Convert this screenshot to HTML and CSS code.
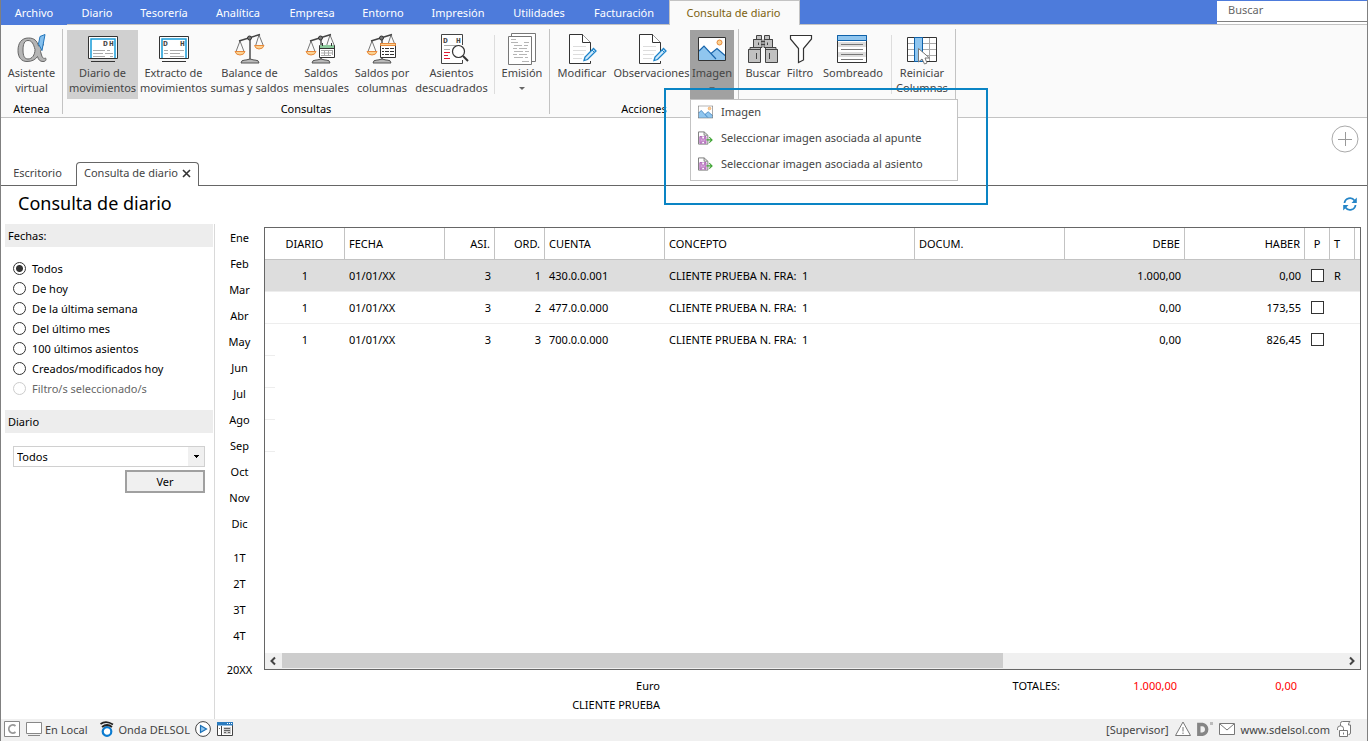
FILE: index.html
```html
<!DOCTYPE html>
<html lang="es">
<head>
<meta charset="utf-8">
<title>Consulta de diario</title>
<link rel="stylesheet" href="styles.css">
</head>
<body>
<svg class="defs" aria-hidden="true">
  <symbol id="scale" viewBox="0 0 36 36">
    <path d="M8 11L4 21.5M8 11L12 21.5M27 5L23.500 16M27 5L31.500 16" fill="none" stroke="#777"/>
    <path d="M7 11L28 4.500M18 9V30" fill="none" stroke="#444" stroke-width="1.400"/>
    <circle cx="17.500" cy="8" r="2" fill="#777" stroke="#333"/>
    <path d="M3 21.500H13Q12 25 8 25Q4 25 3 21.500Z" fill="#fbd293" stroke="#e8893a"/>
    <path d="M9 33Q9 30 13 30H14Q18 28 22 30H23Q27 30 27 33Z" fill="#b9b9b9" stroke="#555"/>
  </symbol>
  <symbol id="page-edit" viewBox="0 0 36 36">
    <path d="M26.500 26V12.500L18.500 4.500H5.500V33.500H26.500V31" fill="#fff" stroke="#333"/>
    <path d="M18.500 4.500V12.500H26.500" fill="#fff" stroke="#333"/>
    <path d="M9 16.500H22M9 20.500H22M9 24.500H20M9 28.500H18" stroke="#ddd"/>
    <path d="M20 30.500L21 27L29.500 18.500L32 21L23.500 29.500Z" fill="#cfe9fa" stroke="#1c83c9" stroke-width="1.300"/>
    <path d="M28 20L30.500 22.500" stroke="#1c83c9"/>
  </symbol>
  <symbol id="image" viewBox="0 0 28 24">
    <path d="M.5 .5H27.500V23.500H.5Z" fill="#fff"/>
    <path d="M1 14L6 9L13 16.500L19 11.500L27 18.500V23H1Z" fill="#90c6ef"/>
    <path d="M1 14L6 9L18 22M13 16.500L19 11.500L27 18.500" fill="none" stroke="#1a67ad" stroke-width="1.200"/>
    <circle cx="21.500" cy="5.500" r="2.500" fill="#fbd293" stroke="#e8893a"/>
    <path d="M.5 .5H27.500V23.500H.5Z" fill="none" stroke="#333"/>
  </symbol>
  <symbol id="save-arrow" viewBox="0 0 16 16">
    <path d="M.5 1.500H6.500L10.500 5V14.500H.5Z" fill="#fff" stroke="#777"/>
    <path d="M6.500 1.500V5H10" fill="none" stroke="#777"/>
    <path d="M2 6.500H8.500V13.500H2Z" fill="#d8a8dc" stroke="#a65ab0"/>
    <path d="M4 6.500V9H7V6.500M4 13.500V11.500H7V13.500" fill="#fff" stroke="#a65ab0" stroke-width=".8"/>
    <path d="M9 10H14.500M12 7L15 10L12 13" fill="none" stroke="#40a535" stroke-width="1.200"/>
  </symbol>
</svg>

<div class="app">
  <nav class="menubar">
    <a class="menu-file" href="#">Archivo</a>
    <a href="#">Diario</a>
    <a href="#">Tesorería</a>
    <a href="#">Analítica</a>
    <a href="#">Empresa</a>
    <a href="#">Entorno</a>
    <a href="#">Impresión</a>
    <a href="#">Utilidades</a>
    <a href="#">Facturación</a>
    <a class="menu-current" href="#">Consulta de diario</a>
    <div class="search"><input type="text" placeholder="Buscar" aria-label="Buscar"></div>
  </nav>

  <div class="ribbon">
    <section class="group">
      <div class="tools tools-atenea">
        <button class="tool" type="button">
          <svg class="icon" viewBox="0 0 36 36"><path d="M29.500 12Q26 18 25 22Q22 31.500 13.500 31.500Q4.500 31.500 4.500 20.500Q4.500 8.500 14.500 8.500Q21 8.500 23 16L25.500 27Q26.500 30.500 30.500 28" fill="none" stroke="#666" stroke-width="0"/><path d="M24.500 16C23 10.500 20 8 14.500 8C7.500 8 4 13 4 20.500C4 27.500 7.500 31.500 13 31.500C18 31.500 21.500 29.500 23.500 26.500C24.500 30 26 31.500 29 31.500C32 31.500 32.500 29.500 31.500 28C29.500 29 28.500 28 27.500 25L26.500 21.500L29.500 14L26 15ZM21 19.500C21 25 18 29 14 29C10.500 29 9 26 9 20C9 14 10.500 10.500 14 10.500C18 10.500 19.500 14 21 19.500Z" fill="#b5b5b5" stroke="#666" fill-rule="evenodd"/><path d="M26 6.500L31 4.500L28 20.500L24.500 14Z" fill="#85c0ee" stroke="#2476bb"/></svg>
          Asistente<br>virtual</button>
      </div>
      <h2>Atenea</h2>
    </section>

    <section class="group">
      <div class="tools tools-consultas">
        <button class="tool selected" type="button">
          <svg class="icon" viewBox="0 0 36 36"><path d="M3.500 6.500H32.500V28.500H3.500ZM6 31.500H30" fill="#fff" stroke="#333"/><path d="M6 28V9H30V28" fill="none" stroke="#189cd8" stroke-width="1.500"/><path d="M8 20.500H20M22 20.500H25M8 23.500H18M20 23.500H28M8 26.500H20M25 26.500H28" stroke="#aaa"/><text class="dh" x="18" y="16">D</text><text class="dh" x="24" y="16">H</text></svg>
          Diario de<br>movimientos</button>
        <button class="tool" type="button">
          <svg class="icon" viewBox="0 0 36 36"><path d="M3.500 6.500H32.500V28.500H3.500ZM6 31.500H30" fill="#fff" stroke="#333"/><path d="M6 28V9H30V28" fill="none" stroke="#189cd8" stroke-width="1.500"/><path d="M8 20.500H12M14 20.500H28M8 23.500H12M14 23.500H24M14 26.500H28" stroke="#aaa"/><text class="dh" x="7" y="16">D</text><text class="dh" x="24" y="16">H</text></svg>
          Extracto de<br>movimientos</button>
        <button class="tool" type="button">
          <svg class="icon" viewBox="0 0 36 36"><use href="#scale"/><path d="M22.500 15.500H32Q31 19 27 19Q23.500 19 22.500 15.500Z" fill="#fbd293" stroke="#e8893a"/></svg>
          Balance de<br>sumas y saldos</button>
        <button class="tool" type="button">
          <svg class="icon" viewBox="0 0 36 36"><use href="#scale"/><path d="M16.500 15.500H31.500V27.500H16.500Z" fill="#fff" stroke="#333"/><path d="M17 15H31V18H17Z" fill="#8cca9c"/><path d="M16 18.500H32" stroke="#333"/><path d="M19.500 13V16M28.500 13V16" stroke="#333"/><path d="M18 20.500H30M18 23H30M18 25.500H28M21.500 20V26M25.500 20V26M29.500 20V25" stroke="#aaa"/></svg>
          Saldos<br>mensuales</button>
        <button class="tool" type="button">
          <svg class="icon" viewBox="0 0 36 36"><use href="#scale"/><path d="M16.500 13.500H31.500V27.500H16.500Z" fill="#fff" stroke="#333"/><path d="M16.500 13.500H31.500V15.500H16.500Z" fill="#fbd293" stroke="#e8893a"/><path d="M18 18.500H20M21 18.500H25M26 18.500H30M18 21.500H20M21 21.500H25M26 21.500H30M18 24.500H20M21 24.500H25M26 24.500H30" stroke="#333"/></svg>
          Saldos por<br>columnas</button>
        <button class="tool" type="button">
          <svg class="icon" viewBox="0 0 36 36"><path d="M28.500 15V4.500H7.500V33.500H28.500V30" fill="#fff" stroke="#444"/><text class="dh" x="9" y="13">D</text><text class="dh" x="22" y="13">H</text><path d="M10 15.500H26M10 19.500H16" stroke="#aaa"/><path d="M10 22.500H16M10 25.500H14M10 28.500H16" stroke="#df1730" stroke-width="1.200"/><circle cx="24.500" cy="21.500" r="6" fill="#fff" stroke="#333" stroke-width="1.200"/><path d="M29 26L34 31" stroke="#333" stroke-width="2"/></svg>
          Asientos<br>descuadrados</button>
        <i class="rule"></i>
        <button class="tool" type="button">
          <svg class="icon" viewBox="0 0 36 36"><path d="M7.500 3.500H31.500V31.500H7.500Z" fill="#fff" stroke="#777"/><path d="M4.500 6.500H27.500V34.500H4.500Z" fill="#fff" stroke="#777"/><path d="M7 9.500H12M20 12.500H25M7 12.500H14M10 15.500H18M20 15.500H24M9 18.500H13M15 18.500H23M10 21.500H19M21 21.500H25M9 24.500H13M15 24.500H23M10 27.500H19M21 27.500H24M18 31.500H25" stroke="#b5b5b5"/></svg>
          Emisión<span class="arrow"></span></button>
      </div>
      <h2>Consultas</h2>
    </section>

    <section class="group">
      <div class="tools tools-acciones">
        <button class="tool" type="button"><svg class="icon" viewBox="0 0 36 36"><use href="#page-edit"/></svg>Modificar</button>
        <button class="tool" type="button"><svg class="icon" viewBox="0 0 36 36"><use href="#page-edit"/></svg>Observaciones</button>
        <div class="dropdown">
          <button class="tool open" type="button" aria-expanded="true"><svg class="icon" viewBox="0 0 36 36"><use href="#image" x="4" y="7" width="28" height="24"/></svg>Imagen<span class="arrow"></span></button>
          <div class="menu">
            <button type="button"><svg viewBox="0 0 28 24"><use href="#image"/></svg>Imagen</button>
            <button type="button"><svg viewBox="0 0 16 16"><use href="#save-arrow"/></svg>Seleccionar imagen asociada al apunte</button>
            <button type="button"><svg viewBox="0 0 16 16"><use href="#save-arrow"/></svg>Seleccionar imagen asociada al asiento</button>
          </div>
          <div class="highlight"></div>
        </div>
      </div>
      <h2>Acciones</h2>
    </section>

    <section class="group">
      <div class="tools tools-ver">
        <button class="tool" type="button"><svg class="icon" viewBox="0 0 36 36"><path d="M3.500 19.500H5V17.500H8.500V9.500H11.500V5.500H16.500V9.500H17V17.500H15.500V32.500H3.500ZM32.500 19.500H31V17.500H27.500V9.500H24.500V5.500H19.500V9.500H19V17.500H20.500V32.500H32.500Z" fill="#c1c1c1" stroke="#444"/><path d="M3.500 19.500H15.500M20.500 19.500H32.500M8 17.500H17M19 17.500H28M8.500 9.500H17M19 9.500H27.500M16 11.500H20M16 14.500H20M11.500 23V29M24.500 23V29M13.500 12.500V15M22.500 12.500V15" fill="none" stroke="#444"/></svg>Buscar</button>
        <button class="tool" type="button"><svg class="icon" viewBox="0 0 36 36"><path d="M8.500 5.500H29.500V9L21.500 18.500V30L16.500 32.500V18.500L8.500 9Z" fill="#fff" stroke="#333" stroke-width="1.200"/></svg>Filtro</button>
        <button class="tool" type="button"><svg class="icon" viewBox="0 0 36 36"><path d="M2.500 5.500H31.500V32.500H2.500Z" fill="#fff" stroke="#333"/><path d="M3 12H31V17H3ZM3 22H31V27H3Z" fill="#ddd"/><path d="M2.500 5.500H31.500V10.500H2.500Z" fill="#90c6ef" stroke="#0f62aa"/><path d="M6 14.500H28M6 19.500H28M6 24.500H28M6 29.500H28" stroke="#777"/></svg>Sombreado</button>
        <i class="rule"></i>
        <button class="tool" type="button"><svg class="icon" viewBox="0 0 36 36"><path d="M3.500 7.500H32.500V31.500H3.500Z" fill="#fff" stroke="#333"/><path d="M4 13.500H32M4 19.500H32M4 25.500H32M25.500 8V31" stroke="#aaa"/><path d="M10.500 7.500H18.500V31.500H10.500Z" fill="#90c6ef" stroke="#0f62aa"/><path d="M14.500 18.500V32L18 29L20.500 34L23 33L21 28H25.500Z" fill="#fff" stroke="#777"/></svg>Reiniciar<br>Columnas</button>
      </div>
    </section>
  </div>

  <div class="tabstrip">
    <a class="tab" href="#">Escritorio</a>
    <div class="tab tab-current"><a href="#">Consulta de diario</a><button class="tab-close" type="button" aria-label="Cerrar"><svg viewBox="0 0 9 9"><path d="M1 1L8 8M8 1L1 8" stroke="#333" stroke-width="1.600"/></svg></button></div>
    <div class="tab-line"><button class="add" type="button" aria-label="Añadir"><svg viewBox="0 0 28 28"><circle cx="14" cy="14" r="13" fill="#fff" stroke="#aaa"/><path d="M7 14.500H21M14.500 7V21" stroke="#999"/></svg></button></div>
  </div>

  <header class="title">
    <h1>Consulta de diario</h1>
    <button type="button" aria-label="Actualizar"><svg viewBox="0 0 14 14"><path d="M1.500 6A5.500 5.500 0 0 1 11.500 3.500M12.500 8A5.500 5.500 0 0 1 2.500 10.500" fill="none" stroke="#2585c7" stroke-width="1.800"/><path d="M13.800 .5V6H8.500ZM.2 13.500V8H5.500Z" fill="#2585c7"/></svg></button>
  </header>

  <div class="work">
    <aside class="filters">
      <h3>Fechas:</h3>
      <div class="radios">
        <label><input type="radio" name="fecha" checked>Todos</label>
        <label><input type="radio" name="fecha">De hoy</label>
        <label><input type="radio" name="fecha">De la última semana</label>
        <label><input type="radio" name="fecha">Del último mes</label>
        <label><input type="radio" name="fecha">100 últimos asientos</label>
        <label><input type="radio" name="fecha">Creados/modificados hoy</label>
        <label class="off"><input type="radio" name="fecha" disabled>Filtro/s seleccionado/s</label>
      </div>
      <h3 id="diario-label">Diario</h3>
      <div class="diary">
        <select aria-labelledby="diario-label"><option>Todos</option></select>
        <button type="button">Ver</button>
      </div>
    </aside>

    <nav class="periods">
      <div><a href="#">Ene</a><a href="#">Feb</a><a href="#">Mar</a><a href="#">Abr</a><a href="#">May</a><a href="#">Jun</a><a href="#">Jul</a><a href="#">Ago</a><a href="#">Sep</a><a href="#">Oct</a><a href="#">Nov</a><a href="#">Dic</a></div>
      <div><a href="#">1T</a><a href="#">2T</a><a href="#">3T</a><a href="#">4T</a></div>
      <div><a href="#">20XX</a></div>
    </nav>

    <main>
      <div class="grid">
        <table>
          <colgroup><col class="w80"><col class="w100"><col class="w50"><col class="w50"><col class="w120"><col><col class="w150"><col class="w120"><col class="w120"><col class="w25"><col class="w25"><col class="w5"></colgroup>
          <thead><tr><th class="mid">DIARIO</th><th>FECHA</th><th class="num">ASI.</th><th class="num">ORD.</th><th>CUENTA</th><th>CONCEPTO</th><th>DOCUM.</th><th class="num">DEBE</th><th class="num">HABER</th><th class="mid">P</th><th>T</th><th></th></tr></thead>
          <tbody>
            <tr class="current"><td class="mid">1</td><td>01/01/XX</td><td class="num">3</td><td class="num">1</td><td>430.0.0.001</td><td>CLIENTE PRUEBA N. FRA:&nbsp; 1</td><td></td><td class="num">1.000,00</td><td class="num">0,00</td><td class="mid"><input type="checkbox" aria-label="P, orden 1"></td><td>R</td><td></td></tr>
            <tr><td class="mid">1</td><td>01/01/XX</td><td class="num">3</td><td class="num">2</td><td>477.0.0.000</td><td>CLIENTE PRUEBA N. FRA:&nbsp; 1</td><td></td><td class="num">0,00</td><td class="num">173,55</td><td class="mid"><input type="checkbox" aria-label="P, orden 2"></td><td></td><td></td></tr>
            <tr class="last"><td class="mid">1</td><td>01/01/XX</td><td class="num">3</td><td class="num">3</td><td>700.0.0.000</td><td>CLIENTE PRUEBA N. FRA:&nbsp; 1</td><td></td><td class="num">0,00</td><td class="num">826,45</td><td class="mid"><input type="checkbox" aria-label="P, orden 3"></td><td></td><td></td></tr>
          </tbody>
        </table>
        <div class="stubs"><i></i><i></i><i></i></div>
        <div class="scroll">
          <svg viewBox="0 0 17 16"><path d="M10 4.500L6.500 8L10 11.500" fill="none" stroke="#444" stroke-width="2"/></svg>
          <div class="track"><div class="thumb"></div></div>
          <svg viewBox="0 0 17 16"><path d="M7 4.500L10.500 8L7 11.500" fill="none" stroke="#444" stroke-width="2"/></svg>
        </div>
      </div>
      <footer class="totals">
        <div>Euro</div><div>TOTALES:</div><div class="red">1.000,00</div><div class="red">0,00</div>
        <div>CLIENTE PRUEBA</div>
      </footer>
    </main>
  </div>

  <footer class="status">
    <svg viewBox="0 0 16 16"><path d="M.5 .5H15.500V15.500H.5Z" fill="#fff" stroke="#888"/><path d="M11.500 5A4 4 0 1 0 11.500 11" fill="none" stroke="#999" stroke-width="1.800"/></svg>
    <svg class="gap-6" viewBox="0 0 16 16"><path d="M.5 1.500H15.500V12.500H.5Z" fill="#fff" stroke="#888"/><path d="M2 14.500H14" stroke="#888"/></svg>
    <span class="gap-3">En Local</span>
    <svg class="gap-12" viewBox="0 0 16 16"><circle cx="8" cy="10.500" r="4.300" fill="#fff" stroke="#0b7bd0" stroke-width="2.200"/><path d="M1.500 3Q7 -1 14 3.500M3 6Q8 2 13 6" fill="none" stroke="#222" stroke-width="1.700"/></svg>
    <span class="gap-3">Onda DELSOL</span>
    <svg class="gap-5" viewBox="0 0 16 16"><circle cx="8" cy="8" r="7.400" fill="#fff" stroke="#444"/><path d="M5.500 4.500L11.500 8L5.500 11.500Z" fill="#90c6ef" stroke="#1a6fb5" stroke-width="1.200"/></svg>
    <svg class="gap-6" viewBox="0 0 16 16"><path d="M.5 1.500H15.500V14.500H.5Z" fill="#fff" stroke="#444"/><path d="M0 1H16V4.500H0Z" fill="#2b7cc0"/><path d="M10 2.500H11M12 2.500H13M14 2.500H15" stroke="#fff"/><path d="M4.500 5V14" stroke="#444"/><path d="M6.500 6H14V13H6.500Z" fill="#ccc"/><path d="M7 7.500H13M7 9.500H13M7 11.500H9M11 11.500H13M2 7.500H3" stroke="#666"/></svg>
    <span class="push">[Supervisor]</span>
    <svg class="gap-6" viewBox="0 0 16 16"><path d="M8 1L15.500 14.500H.5Z" fill="#fff" stroke="#777"/><path d="M8 6V10.500M8 11.500V13" stroke="#777"/></svg>
    <svg class="gap-6" viewBox="0 0 16 16"><path d="M1.800 3.500H5.500A4.900 4.900 0 0 1 5.500 13.200H1.800Z" fill="none" stroke="#858585" stroke-width="3.400"/><path d="M13 1H16V4H13Z" fill="#bbb"/></svg>
    <svg class="gap-6" viewBox="0 0 16 16"><path d="M.5 2.500H15.500V13.500H.5Z" fill="#fff" stroke="#777"/><path d="M1 3L8 9L15 3" fill="none" stroke="#777"/></svg>
    <a class="gap-6" href="#">www.sdelsol.com</a>
    <svg class="gap-6" viewBox="0 0 16 16"><path d="M4.500 5V2.500Q4.500 .5 6.500 .5H14Q12.500 1.500 12.500 4H14.500V12Q14.500 13.500 12.500 13.500" fill="#fff" stroke="#777"/><path d="M3.500 9.500H11.500V15.500H3.500ZM1.500 9V7.500A2.800 2.500 0 0 1 7.500 7.500V9.500" fill="#fff" stroke="#777"/><path d="M7.500 11.500V13.500" stroke="#777"/></svg>
  </footer>
</div>
</body>
</html>
```
FILE: styles.css
```css
* { box-sizing: border-box; }
body, h1, h2, h3 { margin: 0; font-weight: 400; }
body, button, input, select { font-family: "Noto Sans", "Open Sans", sans-serif; font-size: 11px; line-height: 15px; }
body { color: #000; background: #fff; }
button { padding: 0; border: 0; background: none; color: inherit; }
a { color: inherit; text-decoration: none; }
svg { display: block; flex: none; }
.defs { position: absolute; width: 0; height: 0; }

.app { display: flex; flex-direction: column; min-height: 100vh; border: 1px solid #808080; border-top: 0; }

/* Menu bar */
.menubar { display: grid; grid-template-columns: 66px 60px 74px 74px 74px 68px 82px 80px 90px 131px 1fr; height: 25px; background: #4d7bdb; color: #fff; }
.menubar a { display: flex; align-items: center; justify-content: center; white-space: nowrap; border-bottom: 1px solid #c3c3c3; }
.menubar .menu-file { border-bottom-color: #4d7bdb; }
.menubar .menu-current { color: #7d6210; background: #fafafa; border: 1px solid #c3c3c3; border-bottom: 0; padding: 0 2px 2px 0; }
.search { display: flex; justify-content: flex-end; border-bottom: 1px solid #c3c3c3; padding-top: 1px; }
.search input { width: 150px; height: 21px; padding: 0 11px 3px; border: 0; border-bottom: 1px solid #808080; outline: 0; background: #fff; box-shadow: 0 2px #fff; }
.search input::placeholder { color: #666; opacity: 1; }

/* Ribbon */
.ribbon { display: flex; height: 93px; padding-top: 4px; background: #fafafa; border-bottom: 1px solid #c3c3c3; }
.group { height: 85px; border-right: 1px solid #c3c3c3; padding-top: 1px; }
.group h2 { font-size: 11px; text-align: center; padding-top: 2px; }
.tools { display: grid; height: 69px; color: #444; }
.tools-atenea { grid-template-columns: 61px; }
.tools-consultas { grid-template-columns: 71px 71px 81px 62px 60px 79px 7px 48px; padding: 0 3px 0 4px; }
.tools-acciones { grid-template-columns: 62px 75px 44px; column-gap: 1px; padding: 0 4px 0 1px; }
.tools-ver { grid-template-columns: 40px 34px 72px 4px 58px; padding: 0 4px; }
.tool { display: flex; flex-direction: column; align-items: center; width: 100%; height: 69px; white-space: nowrap; text-align: center; color: #444; }
.icon { width: 36px; height: 36px; margin-bottom: -1px; }
.tool.selected { background: #d0d0d0; }
.tool.open { background: #a1a1a1; }
.rule { justify-self: center; width: 1px; height: 59px; margin-top: 5px; background: #ddd; }
.arrow { margin-top: 7px; border: 3px solid transparent; border-top-color: #666; border-bottom: 0; }
.dh { font: bold 8px "Liberation Mono", monospace; fill: #444; }

.dropdown { position: relative; }
.menu { position: absolute; z-index: 2; top: 69px; left: 0; width: 268px; padding-bottom: 2px; background: #fff; border: 1px solid #c3c3c3; }
.menu button { display: flex; align-items: center; gap: 8px; width: 100%; height: 26px; padding: 0 0 3px 7px; white-space: nowrap; color: #444; }
.menu svg { width: 15px; height: 16px; }
.highlight { position: absolute; z-index: 3; top: 58px; left: -26px; width: 324px; height: 117px; border: 2px solid #0a84c4; pointer-events: none; }

/* Document tabs */
.tabstrip { display: flex; align-items: flex-end; height: 68px; color: #444; }
.tab { width: 75px; height: 24px; padding-right: 2px; text-align: center; border-bottom: 1px solid #666; line-height: 22px; }
.tab-current { display: flex; align-items: center; gap: 4px; width: 123px; padding: 0 0 3px 7px; border: 1px solid #666; border-bottom: 0; border-radius: 4px 4px 0 0; white-space: nowrap; }
.tab-close svg { width: 9px; height: 9px; }
.tab-line { flex: 1; align-self: stretch; display: flex; justify-content: flex-end; align-items: flex-start; padding: 7px 8px 0 0; border-bottom: 1px solid #666; }
.add svg { width: 28px; height: 28px; }

.title { display: flex; align-items: center; justify-content: space-between; height: 38px; padding: 0 10px 2px 17px; }
.title h1 { padding-bottom: 2px; font-size: 18px; line-height: 24px; }
.title svg { width: 14px; height: 14px; }

.work { flex: 1; display: flex; min-height: 495px; }

/* Filters */
.filters { width: 214px; padding-left: 4px; border-right: 1px solid #d9d9d9; }
.filters h3 { height: 23px; margin-right: 1px; padding: 4px 3px; font-size: 11px; background: #ededed; }
.radios { padding: 11px 0 12px 8px; }
.radios label { display: flex; align-items: center; gap: 6px; height: 20px; }
.radios input { appearance: none; width: 13px; height: 13px; margin: 0; border: 1px solid #333; border-radius: 50%; background: #fff; }
.radios input:checked { background: radial-gradient(circle, #333 0 3px, #fff 4px); }
.radios .off { color: #666; }
.radios .off input { border-color: #ccc; }
.diary { display: flex; flex-direction: column; align-items: flex-end; gap: 3px; padding: 13px 9px 0 8px; }
.diary select { appearance: none; width: 100%; height: 21px; padding: 0 3px; border: 1px solid #d0d0d0; border-radius: 0; color: #000; background: linear-gradient(#000, #000) right 5px top 8px / 5px 1px no-repeat, linear-gradient(#000, #000) right 6px top 9px / 3px 1px no-repeat, linear-gradient(#000, #000) right 7px top 10px / 1px 1px no-repeat, linear-gradient(#f0f0f0, #f0f0f0) right / 16px 100% no-repeat, #fff; }
.diary button { width: 80px; height: 23px; border: 2px solid #a0a0a0; background: #f0f0f0; }

/* Periods */
.periods { width: 49px; display: flex; flex-direction: column; gap: 8px; padding-top: 1px; text-align: center; }
.periods a { display: block; line-height: 26px; }

/* Journal */
main { flex: 1; min-width: 0; display: flex; flex-direction: column; padding: 3px 6px 0 0; }
.grid { flex: 1; display: flex; flex-direction: column; border: 1px solid #666; }
table { width: 100%; table-layout: fixed; border-collapse: separate; border-spacing: 0; }
.w80 { width: 80px; } .w100 { width: 100px; } .w50 { width: 50px; } .w120 { width: 120px; } .w150 { width: 150px; } .w25 { width: 25px; } .w5 { width: 5px; }
th, td { height: 32px; padding: 0 4px; text-align: left; font-weight: 400; white-space: nowrap; border-bottom: 1px solid #ededed; }
th { border-right: 1px solid #c3c3c3; border-bottom-color: #c3c3c3; }
th:last-child { border-right: 0; padding: 0; }
td:last-child { padding: 0; }
.num { text-align: right; }
.mid { text-align: center; padding: 0; }
.current td { background: #ddd; }
.last td { border-bottom-color: transparent; }
.last td:first-child { background: linear-gradient(#ededed, #ededed) left bottom / 10px 1px no-repeat border-box; }
td input { appearance: none; display: block; width: 13px; height: 13px; margin: 0 auto; border: 1px solid #333; background: #fff; }
.stubs { flex: 1; }
.stubs i { display: block; width: 10px; height: 32px; border-bottom: 1px solid #ededed; }
.scroll { display: flex; height: 16px; background: #f0f0f0; }
.scroll svg { width: 17px; height: 16px; }
.track { flex: 1; }
.thumb { width: 68%; height: 15px; background: #cdcdcd; }

.totals { display: grid; grid-template-columns: 1fr 400px 117px 120px 64px; grid-auto-rows: 19px; align-items: center; height: 49px; padding-top: 6px; text-align: right; }
.totals div:nth-child(5) { grid-column: 1; }
.red { color: #f00; }

/* Status bar */
.status { display: flex; align-items: center; height: 22px; padding: 0 15px 2px 3px; background: #f0f0f0; color: #444; white-space: nowrap; }
.status svg { width: 16px; height: 16px; }
.gap-3 { margin-left: 3px; }
.gap-5 { margin-left: 5px; }
.gap-6 { margin-left: 6px; }
.gap-12 { margin-left: 12px; }
.push { margin-left: auto; }
```
